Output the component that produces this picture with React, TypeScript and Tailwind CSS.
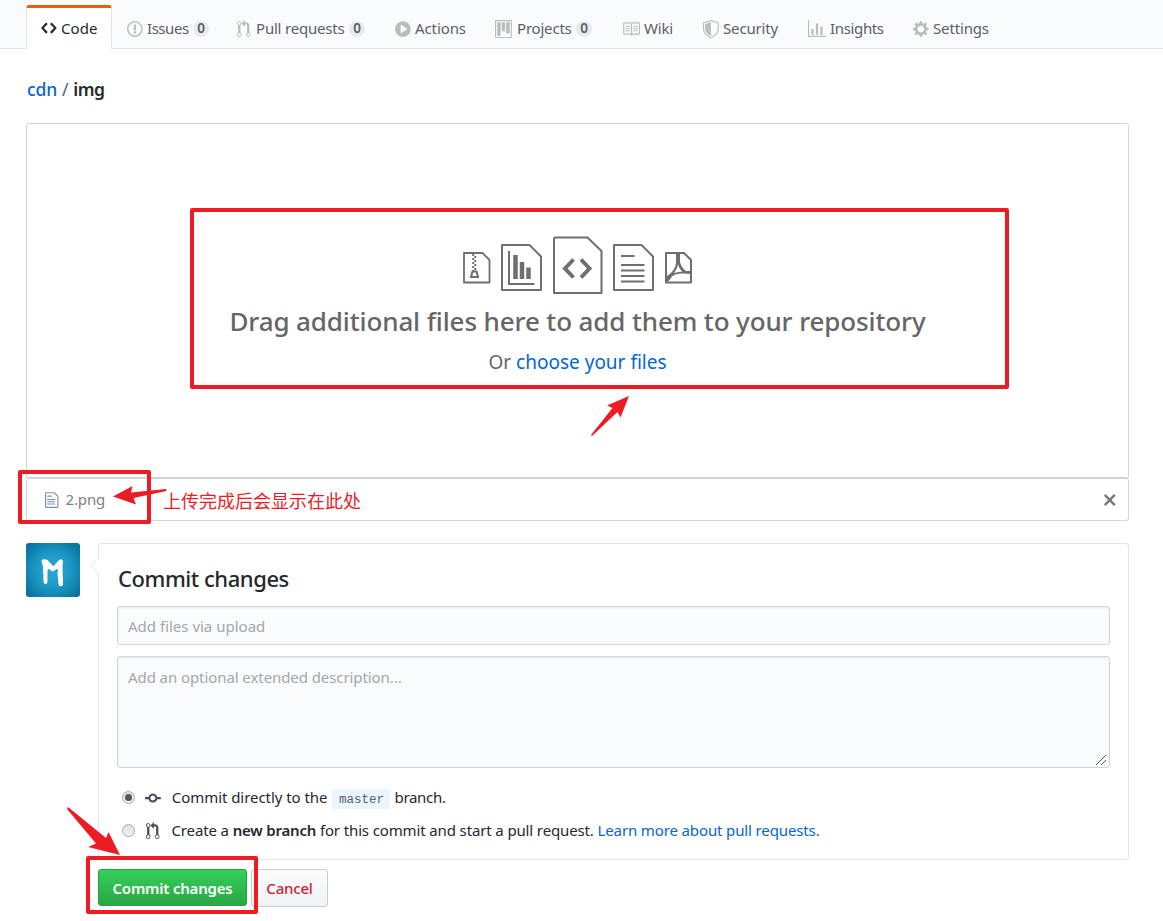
import React from "react";

const ICONS = {
  code: { w: 14, d: "M9.5 3L8 4.5 11.5 8 8 11.5 9.5 13 14 8 9.5 3zm-5 0L0 8l4.5 5L6 11.5 2.5 8 6 4.5 4.5 3z" },
  issue: { w: 14, d: "M7 2.3c3.14 0 5.7 2.56 5.7 5.7s-2.56 5.7-5.7 5.7A5.71 5.71 0 0 1 1.3 8c0-3.14 2.56-5.7 5.7-5.7zM7 1C3.14 1 0 4.14 0 8s3.14 7 7 7 7-3.14 7-7-3.14-7-7-7zm1 3H6v5h2V4zm0 6H6v2h2v-2z" },
  pull: { w: 12, d: "M11 11.28V5c-.03-.78-.34-1.47-.94-2.06C9.46 2.35 8.78 2.03 8 2H7V0L4 3l3 3V4h1c.27.02.48.11.69.31.21.2.3.42.31.69v6.28A1.993 1.993 0 0 0 10 15a1.993 1.993 0 0 0 1-3.72zm-1 2.92c-.66 0-1.2-.55-1.2-1.2 0-.65.55-1.2 1.2-1.2.65 0 1.2.55 1.2 1.2 0 .65-.55 1.2-1.2 1.2zM4 3c0-1.11-.89-2-2-2a1.993 1.993 0 0 0-1 3.72v6.56A1.993 1.993 0 0 0 2 15a1.993 1.993 0 0 0 1-3.72V4.72c.59-.34 1-.98 1-1.72zm-.8 10c0 .66-.55 1.2-1.2 1.2-.65 0-1.2-.55-1.2-1.2 0-.65.55-1.2 1.2-1.2.65 0 1.2.55 1.2 1.2zM2 4.2C1.34 4.2.8 3.65.8 3c0-.65.55-1.2 1.2-1.2.65 0 1.2.55 1.2 1.2 0 .65-.55 1.2-1.2 1.2z" },
  play: { w: 14, d: "M14 8A7 7 0 1 1 0 8a7 7 0 0 1 14 0zm-8.223 3.482l4.599-3.066a.5.5 0 0 0 0-.832L5.777 4.518A.5.5 0 0 0 5 4.934v6.132a.5.5 0 0 0 .777.416z" },
  project: { w: 15, d: "M10 12h3V2h-3v10zm-4-2h3V2H6v8zm-4 4h3V2H2v12zm-1 1h13V1H1v14zM14 0H1a1 1 0 0 0-1 1v14a1 1 0 0 0 1 1h13a1 1 0 0 0 1-1V1a1 1 0 0 0-1-1z" },
  book: { w: 16, d: "M3 5h4v1H3V5zm0 3h4V7H3v1zm0 2h4V9H3v1zm11-5h-4v1h4V5zm0 2h-4v1h4V7zm0 2h-4v1h4V9zm2-6v9c0 .55-.45 1-1 1H9.5l-1 1-1-1H2c-.55 0-1-.45-1-1V3c0-.55.45-1 1-1h5.5l1 1 1-1H15c.55 0 1 .45 1 1zm-8 .5L7.5 3H2v9h6V3.5zm7-.5H9.5l-.5.5V12h6V3z" },
  shield: { w: 14, d: "M0 2l7-2 7 2v6.02C14 12.69 8.69 16 7 16c-1.69 0-7-3.31-7-7.98V2zm1 .75L7 1l6 1.75v5.268C13 12.104 8.449 15 7 15c-1.449 0-6-2.896-6-6.982V2.75zm1 .75L7 2v12c-1.207 0-5-2.482-5-5.985V3.5z" },
  graph: { w: 16, d: "M16 14v1H0V0h1v14h15zM5 13H3V8h2v5zm4 0H7V3h2v10zm4 0h-2V6h2v7z" },
  gear: { w: 14, d: "M14 8.77v-1.6l-1.94-.64-.45-1.09.88-1.84-1.13-1.13-1.81.91-1.09-.45-.69-1.92h-1.6l-.63 1.94-1.11.45-1.84-.88-1.13 1.13.91 1.81-.45 1.09L0 7.23v1.59l1.94.64.45 1.09-.88 1.84 1.13 1.13 1.81-.91 1.09.45.69 1.92h1.59l.63-1.94 1.11-.45 1.84.88 1.13-1.13-.92-1.81.47-1.09L14 8.75v.02zM7 11c-1.66 0-3-1.34-3-3s1.34-3 3-3 3 1.34 3 3-1.34 3-3 3z" },
  commit: { w: 14, d: "M10.86 7c-.45-1.72-2-3-3.86-3-1.86 0-3.41 1.28-3.86 3H0v2h3.14c.45 1.72 2 3 3.86 3 1.86 0 3.41-1.28 3.86-3H14V7h-3.14zM7 10.2c-1.22 0-2.2-.98-2.2-2.2 0-1.22.98-2.2 2.2-2.2 1.22 0 2.2.98 2.2 2.2 0 1.22-.98 2.2-2.2 2.2z" },
  file: { w: 12, d: "M6 5H2V4h4v1zM2 8h7V7H2v1zm0 2h7V9H2v1zm0 2h7v-1H2v1zm10-7.5V14c0 .55-.45 1-1 1H1c-.55 0-1-.45-1-1V2c0-.55.45-1 1-1h7.5L12 4.5zM11 5L8 2H1v12h10V5z" },
  x: { w: 12, d: "M7.48 8l3.75 3.75-1.48 1.48L6 9.48l-3.75 3.75-1.48-1.48L4.52 8 .77 4.25l1.48-1.48L6 6.52l3.75-3.75 1.48 1.48L7.48 8z" },
};

function Icon({ name, className = "" }: { name: keyof typeof ICONS; className?: string }) {
  const { w, d } = ICONS[name];
  return (
    <svg viewBox={`0 0 ${w} 16`} width={w * 1.125} height={18} fill="currentColor" className={`shrink-0 ${className}`}>
      <path fillRule="evenodd" d={d} />
    </svg>
  );
}

type Tab = { icon: keyof typeof ICONS; label: string; box: string; cell: string; text: string; count?: boolean };

const TABS: Tab[] = [
  { icon: "issue", label: "Issues", box: "w-[110px] pr-[13px]", cell: "w-5", text: "tracking-[-0.45px]", count: true },
  { icon: "pull", label: "Pull requests", box: "w-[158px] pr-[15px]", cell: "w-[19px]", text: "tracking-[-0.2px]", count: true },
  { icon: "play", label: "Actions", box: "w-[100px]", cell: "w-5", text: "tracking-[-0.1px]" },
  { icon: "project", label: "Projects", box: "w-[127px] pr-[15px]", cell: "w-[22px]", text: "tracking-[-0.2px]", count: true },
  { icon: "book", label: "Wiki", box: "w-[81px]", cell: "w-[22px]", text: "tracking-[-0.2px]" },
  { icon: "shield", label: "Security", box: "w-[105px]", cell: "w-5", text: "tracking-[-0.15px]" },
  { icon: "graph", label: "Insights", box: "w-[105px]", cell: "w-[22px]", text: "tracking-[-0.35px]" },
  { icon: "gear", label: "Settings", box: "w-[110px]", cell: "w-5", text: "tracking-[-0.15px]" },
];

function Nav() {
  return (
    <nav className="flex h-[49px] shrink-0 items-end border-b border-[#e1e4e8] bg-[#fafbfc] pl-[26px] text-[15px] text-[#586069]">
      <a className="-mb-px flex h-11 w-[86px] items-center rounded-t-[3px] border-x border-t-[3px] border-x-[#e1e4e8] border-t-[#e36209] bg-white pb-px pl-3.5 text-[#24292e]">
        <span className="flex w-5"><Icon name="code" /></span>
        <span className="tracking-[0.1px]">Code</span>
      </a>
      {TABS.map((t) => (
        <a key={t.label} className={`flex h-[39px] items-center pl-[15px] ${t.box}`}>
          <span className={`flex shrink-0 text-[#babcbf] ${t.cell}`}><Icon name={t.icon} /></span>
          <span className={`whitespace-nowrap ${t.text}`}>{t.label}</span>
          {t.count && (
            <span className="ml-auto flex size-4 items-center justify-center rounded-full bg-[#e9eaed] text-[13.500px] font-semibold text-[#586069]">0</span>
          )}
        </a>
      ))}
    </nav>
  );
}

function FileIcons() {
  return (
    <svg viewBox="0 0 230 60" width="230" height="60" fill="none" stroke="#6f6f6f" strokeWidth="2" className="block">
      {/* archive */}
      <path d="M1 18h18.500l7 7v22.500H1z" strokeWidth="1.800" strokeLinejoin="round" />
      <path d="M10.200 19v17M12.300 21v15" strokeWidth="2" strokeDasharray="2 2" />
      <path d="M9.500 36.500h4l1.500 5.500H8z" strokeWidth="2" />
      {/* chart */}
      <path d="M39 10h27.500L78 21.500V55H39z" strokeLinejoin="round" />
      <path d="M46 16v33h25.500" strokeWidth="2" />
      <path d="M52.500 20v24M59 27v17M65.500 32.500V44" strokeWidth="4.500" />
      {/* source */}
      <path d="M92 2.500h32.500L138.500 16v42H91V3.500z" strokeLinejoin="round" />
      <path d="M110.500 24.500L102 33.500l8.500 9M118 24.500l8.500 9-8.500 9" strokeWidth="4" />
      {/* text */}
      <path d="M151 10h27.500L190 21.500V55h-39z" strokeLinejoin="round" />
      <path d="M158 21h13.500M158 30h23.500M158 35.500h23.500M158 41h23.500M158 46.500h23.500" strokeWidth="2" />
      {/* portable document */}
      <path d="M203 18h18l7 7v22.500h-25z" strokeLinejoin="round" />
      <path d="M213 19h4v8c1 4 3 7 6 9l5 0v3l-7-.5c-5-.5-9 .5-12 3-2 3-3 5-6 6v-6c6-3 10-9 10-14.500zM215 29c-.5 4-2 6.500-4 9 3-1 6-1.300 8.500-1.300-2.500-2-4-4.700-4.500-7.700z" fill="#6f6f6f" fillRule="evenodd" stroke="none" />
    </svg>
  );
}

function Arrow({ className, w, h, d }: { className: string; w: number; h: number; d: string }) {
  return (
    <svg className={`absolute ${className}`} width={w} height={h} viewBox={`0 0 ${w} ${h}`} fill="#ed1c24">
      <path d={d} />
    </svg>
  );
}

export default function App() {
  return (
    <div className="relative flex h-[921px] w-[1163px] flex-col overflow-hidden bg-white font-['Noto_Sans','Noto_Sans_CJK_SC',sans-serif] text-[15px] text-[#24292e]">
      <Nav />

      <main className="flex flex-col pl-[26px] pr-[34px]">
        <div className="mt-[26px] flex h-7 items-center gap-[5px] pl-px text-[17.500px] tracking-[-0.15px]">
          <a className="font-medium text-[#0366d6]">cdn</a>
          <span className="text-[#586069]">/</span>
          <strong className="font-semibold tracking-[-0.5px]">img</strong>
        </div>

        <section className="mt-5 flex h-[355px] flex-col items-center rounded-t-[3px] border border-[#d1d5da] pt-[111px] text-[#666]">
          <FileIcons />
          <h2 className="mt-2 h-[36px] whitespace-nowrap text-[26px] font-medium leading-[36px] tracking-[-0.125px]">
            Drag additional files here to add them to your repository
          </h2>
          <p className="mt-[9px] whitespace-nowrap text-[19px] leading-7 tracking-[0px]">
            Or <a className="text-[#0366d6]">choose your files</a>
          </p>
        </section>

        <div className="flex h-[43px] items-center justify-between rounded-[3px] border border-[#d1d5da] pl-[18px] pr-3">
          <div className="flex items-center gap-[7px] text-[#7d8187]">
            <Icon name="file" className="text-[#7a8fb4]" />
            <span className="tracking-[-0.15px]">2.png</span>
          </div>
          <Icon name="x" className="text-[#777]" />
        </div>

        <div className="mt-[22px] flex">
          <svg width="54" height="54" viewBox="0 0 54 54" className="mr-[18px] shrink-0">
            <defs>
              <radialGradient id="avatar" r="0.65"><stop offset="0" stopColor="#2ba9d9" /><stop offset=".5" stopColor="#1c98c5" /><stop offset="1" stopColor="#07729a" /></radialGradient>
            </defs>
            <rect width="54" height="54" rx="3" fill="url(#avatar)" />
            <path d="M15.500 18c0-2 4-2 6-1l5 5.500c1 1 1.500 0 2.500-1l4-4.500c2-1 3-1 4 1l-.5 5c0 6 .5 12 .5 18 0 3-4.500 3-4.500 0l-1-10c.5-3 1-4.500-1-5l-3 2c-1 .7-2 0-3-1-2-2-3-1-3 1v10c0 4-4 4-4 0l-.5-14c0-2-1.500-4-1.500-6z" fill="#fff" />
          </svg>
          <section className="relative h-[317px] flex-1 rounded-[3px] border border-[#e1e4e8] px-[18px]">
            <svg className="absolute -left-[9px] top-3" width="10" height="20" viewBox="0 0 10 20">
              <path d="M9.500 1L1 9.500l8.500 9" fill="#fff" stroke="#e1e4e8" />
            </svg>
            <h3 className="mt-5 h-7 pl-px text-[22px] font-medium leading-7 tracking-[-0.45px]">Commit changes</h3>
            <div className="mt-[14px] flex h-[39px] items-center rounded-[3px] border border-[#d1d5da] bg-[#fafbfc] px-[10px] pt-0.5 text-[#a3a7ac] shadow-[inset_0_1px_2px_rgba(27,31,35,0.08)]">
              <span>Add files via upload</span>
            </div>
            <div className="relative mt-[11px] h-28 rounded-[3px] border border-[#d1d5da] bg-[#fafbfc] px-[10px] pt-2 leading-6 tracking-[-0.08px] text-[#a3a7ac] shadow-[inset_0_1px_2px_rgba(27,31,35,0.08)]">
              Add an optional extended description...
              <svg className="absolute bottom-px right-[2px]" width="12" height="12" viewBox="0 0 12 12" stroke="#555"><path d="M1 11L11 1M6 11l5-5" /></svg>
            </div>
            <div className="mt-[17px] flex h-6 items-center whitespace-nowrap pl-[5px]">
              <Radio checked />
              <Icon name="commit" className="ml-[10px] mt-px text-[#444d56]" />
              <span className="ml-[11px] tracking-[-0.05px]">Commit directly to the</span>
              <code className="ml-[5px] mt-[3px] h-5 w-[58px] rounded-[3px] bg-[#eaf5ff] text-center font-['Liberation_Mono',monospace] text-[12.500px] leading-[23px] text-[#586069]">master</code>
              <span className="ml-1 tracking-[-0.3px]">branch.</span>
            </div>
            <div className="mt-[9px] flex h-6 items-center whitespace-nowrap pl-[5px]">
              <Radio />
              <Icon name="pull" className="ml-[11px] mt-px text-[#444d56]" />
              <span className="ml-3 tracking-[-0.13px]">
                Create a <b className="font-semibold tracking-[-0.2px]">new branch</b> for this commit and start a pull request. <a className="text-[#0366d6]">Learn more about pull requests.</a>
              </span>
            </div>
          </section>
        </div>

        <div className="mt-[9px] flex gap-1 pl-[72px] font-semibold">
          <button className="h-[37px] w-[149px] rounded-[3px] border border-[#279f43] bg-linear-to-b from-[#34d058] to-[#28a745] pt-px tracking-[-0.2px] text-white">Commit changes</button>
          <button className="h-[38px] w-[77px] rounded-[3px] border border-[#c9ccd0] bg-linear-to-b from-[#fafbfc] to-[#eff3f6] font-medium tracking-[-0.2px] text-[#cb2431]">Cancel</button>
        </div>
      </main>

      <div className="absolute left-[190px] top-[208px] h-[181px] w-[819px] rounded-[2px] border-4 border-[#ed1c24]" />
      <div className="absolute left-[18px] top-[470px] h-[54px] w-[133px] rounded-[2px] border-4 border-[#ed1c24]" />
      <div className="absolute left-[86px] top-[856px] h-[58px] w-[172px] rounded-[2px] border-4 border-[#ed1c24]" />
      <Arrow className="left-[590px] top-[395px]" w={42} h={44} d="M39 1L30.500 22.500 27.500 17 2 41 1 40 22.500 13 17 10.500z" />
      <Arrow className="left-[112px] top-[484px]" w={56} h={24} d="M1 12.500L20.500 2 19 8.500 54 5 54.500 7 21.500 14 24 20.500z" />
      <Arrow className="left-[66px] top-[806px]" w={56} h={52} d="M2 1L1 3 30 37.500 22 41 54 49 42.500 26 40 32z" />
      <p className="absolute left-[163px] top-[488px] whitespace-nowrap font-['Noto_Sans_CJK_SC',sans-serif] text-[18px] font-normal leading-6 text-[#ed1c24]">上传完成后会显示在此处</p>
    </div>
  );
}

function Radio({ checked = false }: { checked?: boolean }) {
  return (
    <span className="flex size-[13px] shrink-0 items-center justify-center rounded-full border border-[#aaa] bg-linear-to-b from-[#dedede] to-[#f3f3f3]">
      {checked && <span className="size-[7px] rounded-full bg-[#555]" />}
    </span>
  );
}
